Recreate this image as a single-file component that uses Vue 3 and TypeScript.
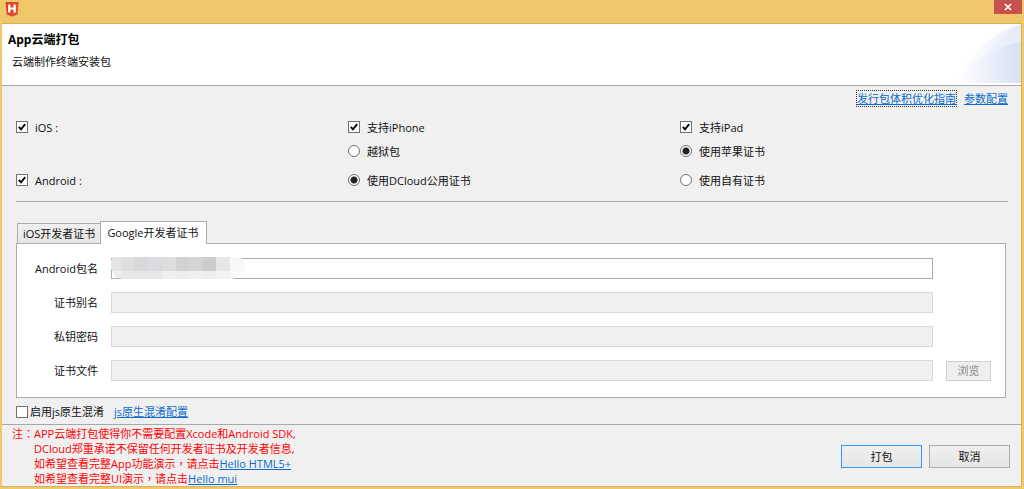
<script setup lang="ts">
import { ref } from 'vue'

interface Field {
  id: string
  label: string
  disabled: boolean
}

interface Block {
  x: number
  y: number
  fill: string
}

const ios = ref(true)
const android = ref(true)
const iphone = ref(true)
const ipad = ref(true)
const obfuscate = ref(false)
const iosCert = ref('apple')
const androidCert = ref('dcloud')
const activeTab = ref('google')

const tabs = [
  { id: 'ios', label: 'iOS开发者证书' },
  { id: 'google', label: 'Google开发者证书' },
]

const fields: Field[] = [
  { id: 'package', label: 'Android包名', disabled: false },
  { id: 'alias', label: '证书别名', disabled: true },
  { id: 'password', label: '私钥密码', disabled: true },
  { id: 'file', label: '证书文件', disabled: true },
]

const edges = [-3, 11, 24, 38, 51, 65, 78, 92, 105, 119]
const topShades = ['#e4e4e5', '#dededf', '#d9d9db', '#dadbde', '#dfdddb', '#d2d2d4', '#d4d4d5', '#cdcccd', '#e5e6ea', '#f8f8f9']
const lowShades = ['#ececec', '#e8e8e8', '#e6e6e6', '#e7e7e8', '#efefef', '#ededed', '#f0f0f0', '#eeeeee', '#f3f3f4', '#fafafa']
const blocks: Block[] = [
  ...topShades.map((fill, i) => ({ x: edges[i], y: 0, fill })),
  ...lowShades.map((fill, i) => ({ x: edges[i], y: 14, fill })),
]
</script>

<template>
  <main class="window">
    <header class="titlebar">
      <svg class="logo" viewBox="0 0 14 16" aria-hidden="true">
        <path d="M0.5 1H13.5L12.3 13.4L7 15.5L1.7 13.4Z" fill="#d9432a" />
        <path d="M7 1H13.5L12.3 13.4L7 15.5Z" fill="#e04f31" />
        <path d="M3.2 3.6H5.4V6.6H8.6V3.6H10.8V11.4H8.6V8.6H5.4V11.4H3.2Z" fill="#fff" />
      </svg>
      <button class="close" type="button" aria-label="关闭">
        <svg viewBox="0 0 8 8" aria-hidden="true"><path d="M1 1L7 7M7 1L1 7" stroke="#fff" stroke-width="1.7" /></svg>
      </button>
    </header>

    <div class="client">
      <section class="banner">
        <h1>App云端打包</h1>
        <p>云端制作终端安装包</p>
        <svg class="swoosh" viewBox="0 0 64 60" aria-hidden="true">
          <defs>
            <linearGradient id="outer" x1="0" x2="1"><stop offset="0" stop-color="#fff" /><stop offset="1" stop-color="#eaf0fa" /></linearGradient>
            <linearGradient id="middle" x1="0" x2="1"><stop offset="0" stop-color="#f3f6fc" /><stop offset="1" stop-color="#e4ebf8" /></linearGradient>
            <linearGradient id="inner" x1="0" x2="1"><stop offset="0" stop-color="#fff" /><stop offset="1" stop-color="#d7e0f4" /></linearGradient>
          </defs>
          <path d="M0 59C12 32 34 7 64 0V59Z" fill="url(#outer)" />
          <path d="M24 40C34 22 46 6 64 1V59H24Z" fill="url(#middle)" />
          <path d="M0 59C14 38 36 22 64 18V59Z" fill="url(#inner)" />
        </svg>
      </section>

      <section class="content">
        <nav class="links">
          <a class="focused" href="#guide">发行包体积优化指南</a>
          <a href="#params">参数配置</a>
        </nav>

        <div class="options">
          <label class="c1"><input v-model="ios" type="checkbox" />iOS :</label>
          <label><input v-model="iphone" type="checkbox" />支持iPhone</label>
          <label><input v-model="ipad" type="checkbox" />支持iPad</label>
          <label class="c2"><input v-model="iosCert" type="radio" name="ios-cert" value="jailbreak" />越狱包</label>
          <label><input v-model="iosCert" type="radio" name="ios-cert" value="apple" />使用苹果证书</label>
          <label class="c1"><input v-model="android" type="checkbox" />Android :</label>
          <label><input v-model="androidCert" type="radio" name="android-cert" value="dcloud" />使用DCloud公用证书</label>
          <label><input v-model="androidCert" type="radio" name="android-cert" value="own" />使用自有证书</label>
        </div>

        <div class="tabs" role="tablist">
          <button
            v-for="tab in tabs"
            :key="tab.id"
            type="button"
            role="tab"
            :class="{ active: activeTab === tab.id }"
            :aria-selected="activeTab === tab.id"
            @click="activeTab = tab.id"
          >{{ tab.label }}</button>
        </div>
        <div class="panel">
          <div v-for="field in fields" :key="field.id" class="row">
            <label :for="field.id">{{ field.label }}</label>
            <div class="box">
              <input :id="field.id" type="text" :disabled="field.disabled" />
              <svg v-if="field.id === 'package'" class="mosaic" viewBox="0 0 134 22" aria-hidden="true">
                <defs><clipPath id="brush"><path d="M3 0H127Q134 2 134 9T127 20Q123 22 118 22H14Q7 22 4 19L0 12V3Z" /></clipPath></defs>
                <g clip-path="url(#brush)">
                  <rect v-for="(b, i) in blocks" :key="i" :x="b.x" :y="b.y" width="16" height="14" :fill="b.fill" />
                </g>
              </svg>
            </div>
            <button v-if="field.id === 'file'" class="browse" type="button" disabled>浏览</button>
          </div>
        </div>

        <div class="obfuscate">
          <label><input v-model="obfuscate" type="checkbox" />启用js原生混淆</label>
          <a href="#obfuscate">js原生混淆配置</a>
        </div>
      </section>

      <footer class="footer">
        <div class="note">
          <span>注<span class="mark">：</span></span>
          <p>
            APP云端打包使得你不需要配置Xcode和Android SDK,<br />
            DCloud郑重承诺不保留任何开发者证书及开发者信息,<br />
            如希望查看完整App功能演示<span class="mark">，</span>请点击<a href="#html5">Hello HTML5+</a><br />
            如希望查看完整UI演示<span class="mark">，</span>请点击<a href="#mui">Hello mui</a>
          </p>
        </div>
        <div class="actions">
          <button class="primary" type="button">打包</button>
          <button type="button">取消</button>
        </div>
      </footer>
    </div>
  </main>
</template>

<style>
body {
  margin: 0;
  background: #f0c869;
}
</style>

<style scoped>
.window {
  box-sizing: border-box;
  min-height: 100vh;
  display: flex;
  flex-direction: column;
  padding: 0 2px 2px;
  background: #f0c869;
  color: #111;
  font: 11px/15px "Open Sans", "Noto Sans CJK SC", sans-serif;
}
button,
input {
  font: inherit;
  color: inherit;
  margin: 0;
}
a {
  color: #0a6cce;
  text-decoration: underline;
}
.titlebar {
  height: 23px;
  display: flex;
  justify-content: space-between;
  align-items: flex-start;
}
.logo {
  width: 14px;
  height: 16px;
  margin: 1px 0 0 3px;
}
.close {
  width: 28px;
  height: 14px;
  padding: 0;
  border: 0;
  background: #c75050;
  display: grid;
  place-items: center;
}
.close svg {
  width: 8px;
  height: 8px;
}
.client {
  flex: 1;
  display: flex;
  flex-direction: column;
  background: #f0f0f0;
  border: 1px solid #d6b25c;
  border-width: 1px 1px 1px 0;
}
.banner {
  position: relative;
  height: 62px;
  box-sizing: border-box;
  padding: 8px 6px 0;
  background: #fff;
  border-bottom: 1px solid #a8a8a8;
}
.banner h1 {
  margin: 0;
  font-size: 12px;
  line-height: 16px;
  color: #000;
}
.banner p {
  margin: 6px 4px 0;
}
.swoosh {
  position: absolute;
  right: 0;
  top: 0;
  width: 64px;
  height: 60px;
}
.content {
  flex: 1;
  padding: 5px 13px 4px 14px;
}
.links {
  display: flex;
  justify-content: flex-end;
  gap: 8px;
}
.links .focused {
  outline: 1px dotted #333;
}
.options {
  display: grid;
  grid-template-columns: repeat(3, 1fr);
  column-gap: 4px;
  padding: 9px 0;
  border-bottom: 1px solid #a8a8a8;
}
.options label {
  height: 24px;
  display: flex;
  align-items: center;
}
.options .c1 {
  grid-column: 1;
}
.options .c2 {
  grid-column: 2;
}
.options label:nth-child(n + 6) {
  margin-top: 5px;
}
input[type="checkbox"],
input[type="radio"] {
  appearance: none;
  box-sizing: border-box;
  flex: none;
  width: 12px;
  height: 12px;
  margin-right: 7px;
  border: 1px solid #707070;
  background: #fff;
}
input[type="checkbox"]:checked {
  background: #fff url("data:image/svg+xml,%3Csvg xmlns='http://www.w3.org/2000/svg' viewBox='0 0 10 10'%3E%3Cpath d='M1.8 4.8L4 7.3L8.2 2.2' fill='none' stroke='%23000' stroke-width='1.9'/%3E%3C/svg%3E") center / 10px 10px;
}
input[type="radio"] {
  border-radius: 50%;
}
input[type="radio"]:checked {
  background: radial-gradient(circle, #222 0 3px, #fff 4px);
}
.tabs {
  display: flex;
  align-items: flex-end;
  margin-top: 19px;
  padding-left: 1px;
}
.tabs button {
  height: 20px;
  padding: 0 5px;
  border: 1px solid #acacac;
  border-width: 1px 0 0 1px;
  background: linear-gradient(#f0f0f0, #e5e5e5);
}
.tabs .active {
  position: relative;
  height: 23px;
  margin-bottom: -1px;
  padding: 0 7px 2px 6px;
  border-width: 1px 1px 0;
  background: #fff;
}
.panel {
  display: grid;
  gap: 13px;
  margin-right: 2px;
  padding: 14px 14px 16px;
  border: 1px solid #acacac;
  background: #fff;
}
.row {
  display: grid;
  grid-template-columns: 67px 1fr 45px;
  column-gap: 13px;
  align-items: center;
}
.row label {
  text-align: right;
}
.box {
  position: relative;
  height: 21px;
}
.box input {
  box-sizing: border-box;
  display: block;
  width: 100%;
  height: 21px;
  padding: 0 4px;
  border: 1px solid #ababb3;
  background: #fff;
}
.box input:disabled {
  border-color: #d9d9d9;
  background: #f0f0f0;
}
.mosaic {
  position: absolute;
  left: 0;
  top: -1px;
  width: 134px;
  height: 22px;
}
.browse {
  height: 20px;
  padding: 0;
  border: 1px solid #d0d0d0;
  background: #efefef;
  color: #888;
}
.obfuscate {
  display: flex;
  gap: 10px;
  margin-top: 6px;
}
.obfuscate label {
  display: flex;
  align-items: center;
}
.obfuscate input {
  margin-right: 2px;
}
.footer {
  display: flex;
  justify-content: space-between;
  align-items: center;
  padding: 1px 11px 0 10px;
  border-top: 1px solid #a8a8a8;
}
.note {
  display: flex;
  color: #f00;
}
.note p {
  margin: 0;
}
.mark {
  font-family: "Noto Sans CJK TC", sans-serif;
  line-height: 1;
}
.actions {
  display: flex;
  gap: 7px;
}
.actions button {
  width: 81px;
  height: 23px;
  padding: 0;
  border: 1px solid #acacac;
  background: linear-gradient(#f0f0f0, #e5e5e5);
}
.actions .primary {
  border-color: #3399ff;
}
</style>
